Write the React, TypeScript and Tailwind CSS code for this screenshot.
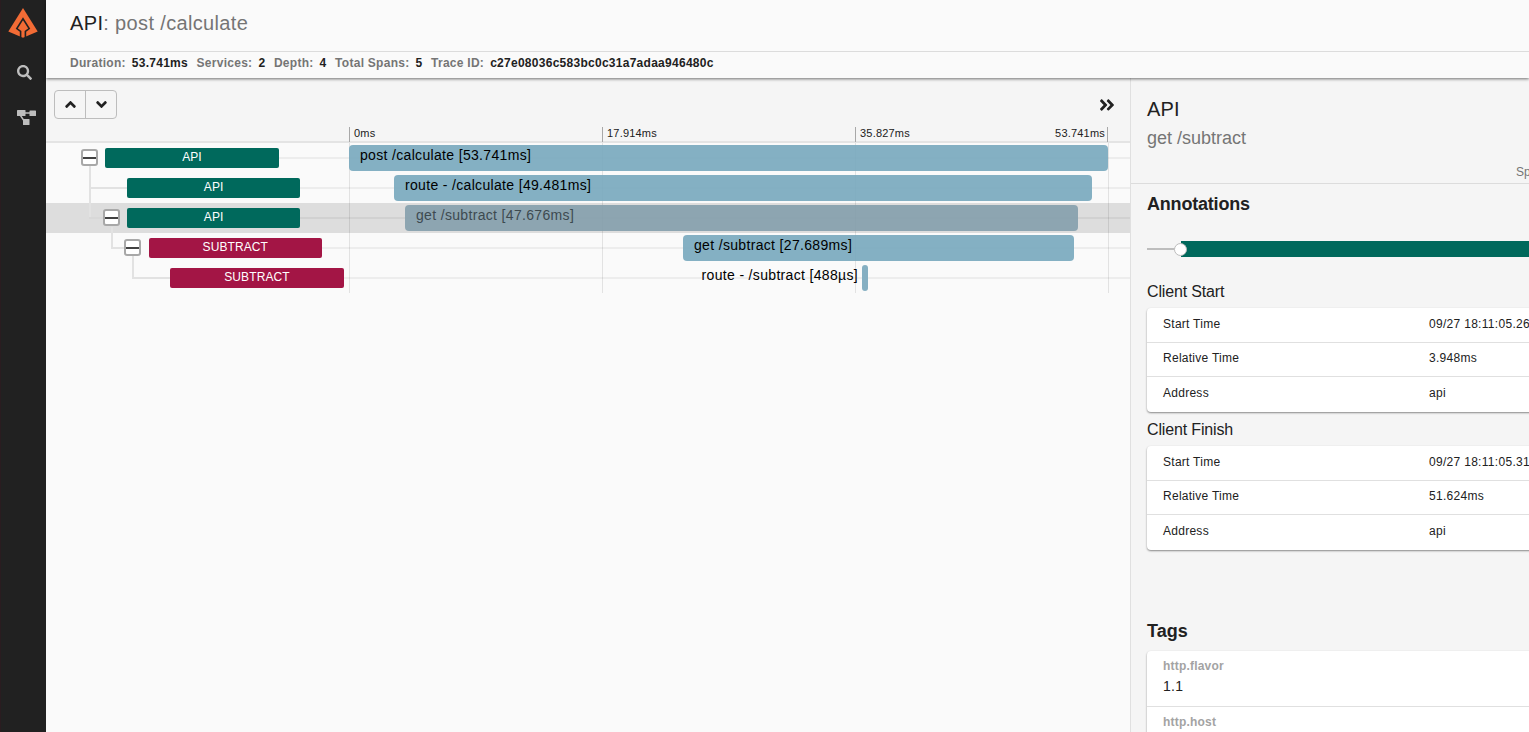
import { FaAngleDoubleRight, FaAngleDown, FaAngleUp, FaSearch } from "react-icons/fa";

type Row = { depth: number; service: string; color: string; name: string; left: number; width: number; selected?: boolean; outside?: boolean; toggle: boolean };

const rows: Row[] = [
  { depth: 0, service: "API", color: "bg-[#00695c]", name: "post /calculate [53.741ms]", left: 0, width: 759, toggle: true },
  { depth: 1, service: "API", color: "bg-[#00695c]", name: "route - /calculate [49.481ms]", left: 45, width: 698, toggle: false },
  { depth: 1, service: "API", color: "bg-[#00695c]", name: "get /subtract [47.676ms]", left: 56, width: 673, selected: true, toggle: true },
  { depth: 2, service: "SUBTRACT", color: "bg-[#a31545]", name: "get /subtract [27.689ms]", left: 334, width: 391, toggle: true },
  { depth: 3, service: "SUBTRACT", color: "bg-[#a31545]", name: "route - /subtract [488µs]", left: 513, width: 6, outside: true, toggle: false },
];

const ticks = ["0ms", "17.914ms", "35.827ms", "53.741ms"];

function Summary({ label, value, last }: { label: string; value: string; last?: boolean }) {
  return (
    <span className={last ? "flex gap-[6px]" : "flex gap-[6px] mr-[8.6px]"}>
      <span className="text-[#757575]">{label}</span>
      <span className="text-[#212121]">{value}</span>
    </span>
  );
}

function Toggle() {
  return (
    <span className="relative z-10 -mt-[1px] flex h-[17px] w-[17px] shrink-0 items-center rounded-[3px] border-2 border-[#a8a8a8] bg-white">
      <span className="h-[2px] w-full bg-[#424242]" />
    </span>
  );
}

function InfoCard({ rows }: { rows: [string, string][] }) {
  return (
    <div className="w-[600px] rounded-[4px] bg-white pb-[0.5px] shadow-[0_1px_2px_rgba(0,0,0,0.45)]">
      {rows.map(([k, v], i) => (
        <div key={k} className={`flex h-[34.5px] items-center pb-[2px] pl-[16px] text-[12px] text-[#212121] ${i < rows.length - 1 ? "border-b border-[#e0e0e0]" : ""}`}>
          <span className="w-[266px] tracking-[0.27px]">{k}</span>
          <span className="tracking-[0.3px]">{v}</span>
        </div>
      ))}
    </div>
  );
}

export default function App() {
  return (
    <div className="flex h-[732px] w-[1529px] overflow-hidden bg-[#fafafa] font-['Liberation_Sans',Arial,sans-serif] text-[#212121]">
      <aside className="flex w-[46px] shrink-0 flex-col items-center border-l border-[#2a1c20] bg-[#212121]">
        <svg viewBox="0 0 30 30" className="mt-[8px] -ml-[1px] h-[30px] w-[30px]">
          <path d="M15 0 L29.7 23.5 L15 29.8 L0.3 23.5 Z" fill="#f26b35" />
          <path d="M12.6 29 V23.4 L8.8 20.6 L15 10.8 L21.2 20.6 L17.4 23.4 V29" stroke="#212121" strokeWidth="1.6" fill="none" />
        </svg>
        <FaSearch className="mt-[27px] ml-[2px] text-[15px] text-[#bdbdbd]" />
        <svg viewBox="0 0 19 15" className="mt-[30px] ml-[6px] h-[15px] w-[19px]" fill="#bdbdbd">
          <rect x="0" y="0" width="8.5" height="6" rx="0.6" />
          <rect x="12.5" y="0.5" width="6.5" height="5.5" rx="0.6" />
          <rect x="6" y="9" width="6.5" height="6" rx="0.6" />
          <path d="M8 3 H13 M3.5 5.5 L7.5 11.5" stroke="#bdbdbd" strokeWidth="1.4" fill="none" />
        </svg>
      </aside>

      <div className="flex min-w-0 flex-1 flex-col">
        <header className="relative z-20 h-[78px] shrink-0 bg-[#fafafa] pl-[24px] shadow-[0_1px_3px_rgba(0,0,0,0.55)]">
          <div className="flex h-[52px] items-center border-b border-[#dcdcdc] pb-[6px] text-[20px] tracking-[0.35px]">
            <span className="text-[#212121]">API</span>
            <span className="text-[#757575]">: post /calculate</span>
          </div>
          <div className="flex h-[22px] items-center text-[12px] font-bold tracking-[0.27px]">
            <Summary label="Duration:" value="53.741ms" />
            <Summary label="Services:" value="2" />
            <Summary label="Depth:" value="4" />
            <Summary label="Total Spans:" value="5" />
            <Summary label="Trace ID:" value="c27e08036c583bc0c31a7adaa946480c" last />
          </div>
        </header>

        <div className="flex min-h-0 flex-1">
          <main className="flex w-[1084px] shrink-0 flex-col">
            <div className="h-[65px] shrink-0 border-b-2 border-[#e4e4e4] bg-[#f5f5f5]">
              <div className="flex items-start justify-between pt-[12px] pl-[8px] pr-[14px]">
                <div className="flex h-[29px] w-[63px] items-center rounded-[4px] border border-[#bdbdbd]">
                  <span className="flex h-full w-[31px] items-center justify-center border-r border-[#bdbdbd]">
                    <FaAngleUp className="text-[17px] text-[#212121]" />
                  </span>
                  <span className="flex flex-1 items-center justify-center">
                    <FaAngleDown className="text-[17px] text-[#212121]" />
                  </span>
                </div>
                <FaAngleDoubleRight className="mt-[6px] text-[18px] text-[#212121]" />
              </div>
              <div className="mt-[8px] flex pl-[303px] pr-[22px] text-[11px] leading-[13px] tracking-[0.2px] text-[#212121]">
                {ticks.map((t, i) => (
                  <span key={t} className={i < 3 ? "h-[15px] w-[253px] border-l border-[#a8a8a8] pl-[4px]" : "h-[15px] flex-1 text-right border-r border-[#a8a8a8] pr-[2px] -ml-[253px] w-[253px]"}>
                    {t}
                  </span>
                ))}
              </div>
            </div>

            <div className="relative">
              {/* time grid */}
              {[303, 556, 809, 1062].map((x) => (
                <div key={x} className="absolute top-0 h-[150px] w-px bg-[#e2e2e2]" style={{ left: x }} />
              ))}
              {rows.map((r, i) => (
                <div key={i} className={`relative flex h-[30px] items-center ${r.selected ? "bg-black/[0.115]" : ""}`}>
                  <div className="absolute right-0 left-[233px] top-[14px] h-[2px] bg-black/5" />
                  <div className="relative flex w-[303px] shrink-0 items-center" style={{ paddingLeft: 35 + r.depth * 21.67 }}>
                    <span className="flex w-[24.33px] shrink-0">{r.toggle && <Toggle />}</span>
                    <span className={`relative z-10 flex h-[20px] w-[173.33px] items-center justify-center rounded-[2px] pb-[2px] text-[12px] tracking-[0.1px] text-white ${r.color}`}>{r.service}</span>
                  </div>
                  <div className="relative h-full flex-1">
                    <div
                      className={`absolute top-[2px] h-[26px] rounded-[4px] ${r.outside ? "bg-[#85afc2]" : r.selected ? "bg-[rgba(134,160,173,0.92)]" : "bg-[rgba(122,169,190,0.92)]"}`}
                      style={{ left: r.left, width: r.width }}
                    >
                      {r.outside ? (
                        <span className="absolute right-[10px] top-0 whitespace-nowrap text-[14px] leading-[21px] tracking-[0.33px] text-black">{r.name}</span>
                      ) : (
                        <span className={`block pl-[11px] text-[14px] leading-[21px] tracking-[0.33px] whitespace-nowrap ${r.selected ? "text-[#3d4a50]" : "text-black"}`}>{r.name}</span>
                      )}
                    </div>
                  </div>
                </div>
              ))}

              {/* tree connectors */}
              <div className="absolute left-[43px] top-[23px] h-[52px] w-[2px] bg-[#e2e2e2]" />
              <div className="absolute left-[43px] top-[44px] h-[2px] w-[38px] bg-[#e2e2e2]" />
              <div className="absolute left-[43px] top-[74px] h-[2px] w-[14px] bg-[#d8d8d8]" />
              <div className="absolute left-[65px] top-[84px] h-[22px] w-[2px] bg-[#e2e2e2]" />
              <div className="absolute left-[65px] top-[104px] h-[2px] w-[14px] bg-[#e2e2e2]" />
              <div className="absolute left-[86px] top-[113px] h-[23px] w-[2px] bg-[#e2e2e2]" />
              <div className="absolute left-[86px] top-[134px] h-[2px] w-[38px] bg-[#e2e2e2]" />
            </div>
          </main>

          <section className="min-w-0 flex-1 overflow-hidden border-l border-[#e0e0e0] bg-[#f5f5f5]">
            <div className="relative h-[106px] border-b border-[#dcdcdc] pl-[16px]">
              <div className="pt-[18px] text-[20px] leading-[26px] tracking-[0.2px] text-[#212121]">API</div>
              <div className="mt-[5px] text-[18px] leading-[22px] text-[#757575]">get /subtract</div>
              <div className="absolute left-[385px] top-[87px] whitespace-nowrap text-[12px] leading-[14px] text-[#757575]">Span ID</div>
            </div>
            <div className="pl-[16px]">
              <h2 className="pt-[9px] text-[18px] font-bold leading-[22px] tracking-[-0.2px]">Annotations</h2>
              <div className="relative mt-[26px] h-[16px] w-[600px]">
                <div className="absolute left-0 top-[7px] h-[2px] w-[34px] bg-[#bdbdbd]" />
                <div className="absolute left-[34px] top-0 h-[16px] w-[566px] bg-[#00695c]" />
                <div className="absolute left-[27px] top-[2px] h-[13px] w-[13px] rounded-full border border-[#bdbdbd] bg-white" />
              </div>
              <h3 className="mt-[25px] text-[16px] leading-[20px] tracking-[-0.15px]">Client Start</h3>
              <div className="mt-[6px]">
                <InfoCard rows={[["Start Time", "09/27 18:11:05.264"], ["Relative Time", "3.948ms"], ["Address", "api"]]} />
              </div>
              <h3 className="mt-[8px] text-[16px] leading-[20px] tracking-[-0.15px]">Client Finish</h3>
              <div className="mt-[6px]">
                <InfoCard rows={[["Start Time", "09/27 18:11:05.312"], ["Relative Time", "51.624ms"], ["Address", "api"]]} />
              </div>
              <h2 className="mt-[70px] text-[18px] font-bold leading-[22px]">Tags</h2>
              <div className="mt-[9px] w-[600px] rounded-[4px] bg-white shadow-[0_1px_2px_rgba(0,0,0,0.45)]">
                <div className="h-[56px] border-b border-[#e0e0e0] pl-[16px] pt-[8px]">
                  <div className="text-[12px] font-bold leading-[14px] tracking-[0.2px] text-[#a3a3a3]">http.flavor</div>
                  <div className="mt-[4px] text-[14px] leading-[18px] tracking-[0.3px]">1.1</div>
                </div>
                <div className="h-[56px] pl-[16px] pt-[8px]">
                  <div className="text-[12px] font-bold leading-[14px] tracking-[0.2px] text-[#a3a3a3]">http.host</div>
                </div>
              </div>
            </div>
          </section>
        </div>
      </div>
    </div>
  );
}
